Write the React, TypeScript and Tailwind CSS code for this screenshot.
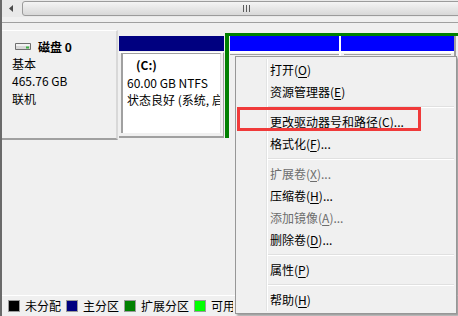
import React from 'react';

const font = { fontFamily: '"Noto Sans CJK SC", "Noto Sans", sans-serif' };

type Item = { label: string; key: string; tail?: string; disabled?: boolean } | 'sep';

const menuItems: Item[] = [
  { label: '打开', key: 'O' },
  { label: '资源管理器', key: 'E' },
  'sep',
  { label: '更改驱动器号和路径', key: 'C', tail: '...' },
  { label: '格式化', key: 'F', tail: '...' },
  'sep',
  { label: '扩展卷', key: 'X', tail: '...', disabled: true },
  { label: '压缩卷', key: 'H', tail: '...' },
  { label: '添加镜像', key: 'A', tail: '...', disabled: true },
  { label: '删除卷', key: 'D', tail: '...' },
  'sep',
  { label: '属性', key: 'P' },
  'sep',
  { label: '帮助', key: 'H' },
];

const legend = [
  { color: 'bg-black', label: '未分配' },
  { color: 'bg-[#000080]', label: '主分区' },
  { color: 'bg-[#008000]', label: '扩展分区' },
  { color: 'bg-[#00ff00]', label: '可用空间' },
];

function DiskIcon() {
  return (
    <svg width="18" height="9" viewBox="0 0 18 9" className="shrink-0">
      <path d="M1.5 1.5 H16.5 V7.5 H1.5 Z" fill="#d8d8d8" stroke="#6f6f6f" />
      <path d="M2 2 H16 V4 H2 Z" fill="#f2f2f2" />
      <rect x="12" y="4.5" width="3" height="2" fill="#3cb043" />
    </svg>
  );
}

function ContextMenu() {
  return (
    <div className="absolute left-[233px] top-[56px] w-[222px] h-[258px] bg-[#f0f0f0] border border-[#979797] shadow-[2px_2px_2px_rgba(0,0,0,0.35)] py-[2px] flex">
      <div className="absolute left-[30px] top-[2px] bottom-[2px] w-[2px] border-l border-[#e2e3e3] bg-white" />
      <div className="flex-1 flex flex-col">
        {menuItems.map((it, i) =>
          it === 'sep' ? (
            <div key={i} className="h-[8px] flex items-center pl-[32px] pr-[2px]">
              <div className="w-full h-[2px] border-t border-[#e0e0e0] bg-white" />
            </div>
          ) : (
            <div
              key={i}
              className={`h-[22px] flex items-center pl-[34px] text-[12px] leading-none ${it.disabled ? 'text-[#6d6d6d]' : 'text-black'}`}
            >
              {it.label}(<span className="underline underline-offset-2">{it.key}</span>){it.tail}
            </div>
          )
        )}
      </div>
    </div>
  );
}

export default function App() {
  return (
    <div className="relative w-[458px] h-[316px] overflow-hidden bg-[#f0f0f0] border-l-2 border-[#6a6a6a] flex flex-col" style={font}>
      {/* horizontal scroll bar */}
      <div className="h-[17px] flex items-stretch py-[1px] bg-[#e9e9e9]">
        <div className="w-[18px] flex items-center justify-center">
          <svg width="5" height="7" viewBox="0 0 5 7"><path d="M4 0 L0 3.5 L4 7 Z" fill="#4a4a4a" /></svg>
        </div>
        <div className="flex-1 ml-[2px] -mr-[4px] rounded-l-[3px] border border-[#9b9b9b] bg-gradient-to-b from-[#f4f4f4] to-[#d8d8d8] flex items-center justify-center">
          <div className="flex gap-[2px] ml-[8px]">
            <div className="w-[1px] h-[7px] bg-[#5c5c5c]" />
            <div className="w-[1px] h-[7px] bg-[#5c5c5c]" />
            <div className="w-[1px] h-[7px] bg-[#5c5c5c]" />
          </div>
        </div>
      </div>
      <div className="h-[6px] border-b border-[#a0a0a0]" />
      <div className="h-[7px]" />

      {/* disk row */}
      <div className="h-[110px] flex">
        <div className="w-[116px] border-t border-white border-r-2 border-r-[#d8d8d8] border-b-2 border-b-[#a0a0a0] pl-[10px] pt-[7px] text-[12px] text-black leading-[17.5px]">
          <div className="flex items-center gap-[6px] pl-[2px] mb-[-1px]">
            <DiskIcon />
            <span className="font-bold">磁盘 0</span>
          </div>
          <div>基本</div>
          <div>465.76 GB</div>
          <div>联机</div>
        </div>

        <div className="flex-1 flex pt-[3px] pb-[2px]">
          {/* primary C: */}
          <div className="w-[107px] flex flex-col px-[1px] pt-[3px]">
            <div className="h-[15px] bg-[#000080]" />
            <div className="flex-1 mt-[1px] border-t border-white border-b-2 border-b-[#a0a0a0] border-r border-r-[#a0a0a0] pl-[2px] pr-[2px] pb-[3px]">
              <div className="h-full bg-white border-l-2 border-t border-[#a0a0a0] border-r border-r-[#e0e0e0] pl-[4px] pt-[2px] text-[12px] leading-[17.5px] text-black whitespace-nowrap overflow-hidden">
                <div className="font-bold pl-[9px]">(C:)</div>
                <div>60.00 GB NTFS</div>
                <div className="w-full overflow-hidden">状态良好 (系统, 启动, 页面文件)</div>
              </div>
            </div>
          </div>

          {/* extended partition */}
          <div className="flex-1 border-t-[3px] border-l-4 border-[#008000] flex pl-[1px] pr-[2px]">
            <div className="w-[109px] flex flex-col">
              <div className="h-[15px] bg-[#0000ff]" />
              <div className="flex-1 border-t-2 border-white">
                <div className="mt-[1px] h-[2px] border-t border-[#a0a0a0]" />
              </div>
            </div>
            <div className="w-[2px] bg-white" />
            <div className="flex-1 flex flex-col border-r-2 border-[#a0a0a0]">
              <div className="h-[15px] bg-[#0000ff]" />
              <div className="flex-1 border-t-2 border-white px-[3px]">
                <div className="mt-[1px] border-t border-[#a0a0a0]" />
              </div>
            </div>
          </div>
        </div>
      </div>

      <div className="flex-1" />

      {/* legend */}
      <div className="h-[21px] border-t border-white">
        <div className="w-[231px] h-full overflow-hidden flex items-center gap-[5px] pl-[6px] text-[12px] text-black leading-none whitespace-nowrap">
          {legend.map((l) => (
            <div key={l.label} className="flex items-center gap-[5px] shrink-0">
              <div className={`w-[12px] h-[12px] border border-[#9a9a9a] ${l.color}`} />
              <span>{l.label}</span>
            </div>
          ))}
        </div>
      </div>

      <ContextMenu />

      {/* annotation box */}
      <div className="absolute left-[235px] top-[107px] w-[184px] h-[24px] border-[3px] border-[#f03a3a]" />
    </div>
  );
}
